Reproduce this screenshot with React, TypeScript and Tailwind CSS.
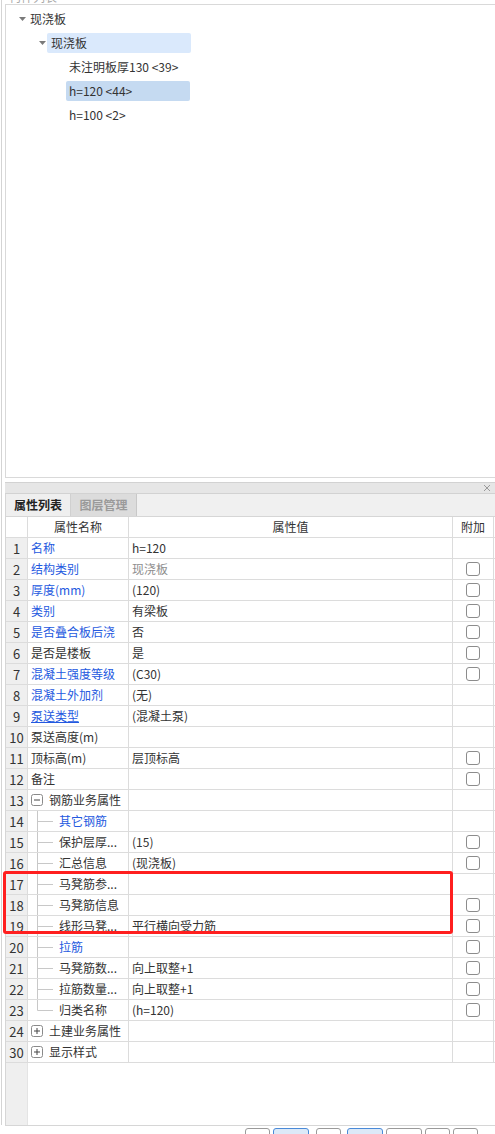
import React from 'react'

type Kind = 'plain' | 'open' | 'closed' | 'child' | 'last'

interface Row {
  n: number
  name: string
  value?: string
  blue?: boolean
  grayValue?: boolean
  underline?: boolean
  cb?: boolean
  kind: Kind
}

const rows: Row[] = [
  { n: 1, name: '名称', value: 'h=120', blue: true, kind: 'plain' },
  { n: 2, name: '结构类别', value: '现浇板', blue: true, grayValue: true, cb: true, kind: 'plain' },
  { n: 3, name: '厚度(mm)', value: '(120)', blue: true, cb: true, kind: 'plain' },
  { n: 4, name: '类别', value: '有梁板', blue: true, cb: true, kind: 'plain' },
  { n: 5, name: '是否叠合板后浇', value: '否', blue: true, cb: true, kind: 'plain' },
  { n: 6, name: '是否是楼板', value: '是', cb: true, kind: 'plain' },
  { n: 7, name: '混凝土强度等级', value: '(C30)', blue: true, cb: true, kind: 'plain' },
  { n: 8, name: '混凝土外加剂', value: '(无)', blue: true, kind: 'plain' },
  { n: 9, name: '泵送类型', value: '(混凝土泵)', blue: true, underline: true, kind: 'plain' },
  { n: 10, name: '泵送高度(m)', kind: 'plain' },
  { n: 11, name: '顶标高(m)', value: '层顶标高', cb: true, kind: 'plain' },
  { n: 12, name: '备注', cb: true, kind: 'plain' },
  { n: 13, name: '钢筋业务属性', kind: 'open' },
  { n: 14, name: '其它钢筋', blue: true, kind: 'child' },
  { n: 15, name: '保护层厚...', value: '(15)', cb: true, kind: 'child' },
  { n: 16, name: '汇总信息', value: '(现浇板)', cb: true, kind: 'child' },
  { n: 17, name: '马凳筋参...', kind: 'child' },
  { n: 18, name: '马凳筋信息', cb: true, kind: 'child' },
  { n: 19, name: '线形马凳...', value: '平行横向受力筋', cb: true, kind: 'child' },
  { n: 20, name: '拉筋', blue: true, cb: true, kind: 'child' },
  { n: 21, name: '马凳筋数...', value: '向上取整+1', cb: true, kind: 'child' },
  { n: 22, name: '拉筋数量...', value: '向上取整+1', cb: true, kind: 'child' },
  { n: 23, name: '归类名称', value: '(h=120)', cb: true, kind: 'last' },
  { n: 24, name: '土建业务属性', kind: 'closed' },
  { n: 30, name: '显示样式', kind: 'closed' },
]

const Caret = () => (
  <svg width="7" height="4" viewBox="0 0 7 4" className="shrink-0">
    <path d="M0 0 L7 0 L3.5 4 Z" fill="#7a7a7a" />
  </svg>
)

const ToggleBox = ({ open }: { open: boolean }) => (
  <svg width="12" height="12" viewBox="0 0 12 12" className="shrink-0">
    <rect x="0.5" y="0.5" width="11" height="11" rx="2" fill="#fff" stroke="#8a8a8a" />
    <path d="M3 6 H9" stroke="#444" />
    {!open && <path d="M6 3 V9" stroke="#444" />}
  </svg>
)

const Connector = ({ last }: { last: boolean }) => (
  <svg width="26" height="21" viewBox="0 0 26 21" className="shrink-0 self-start">
    <path d={last ? 'M9.5 0 V10.5' : 'M9.5 0 V21'} stroke="#c8c8c8" />
    <path d="M9.5 10.5 H25" stroke="#c8c8c8" />
  </svg>
)

const Checkbox = () => (
  <div className="w-[14px] h-[14px] rounded-[3px] border border-[#8c8c8c] bg-white" />
)

const PropRow = ({ row }: { row: Row }) => {
  const nameColor = row.blue ? 'text-[#2459e0]' : 'text-[#333]'
  return (
    <div className="flex shrink-0 h-[21px] border-b border-[#dcdcdc]">
      <div className="w-[22px] shrink-0 bg-[#efefef] border-r border-[#dcdcdc] flex items-center justify-center text-[13px] text-[#333]">
        {row.n}
      </div>
      <div className="w-[101px] shrink-0 border-r border-[#dcdcdc] flex items-center overflow-hidden whitespace-nowrap">
        {row.kind === 'plain' && (
          <span className={`pl-[3px] ${nameColor} ${row.underline ? 'underline' : ''}`}>{row.name}</span>
        )}
        {(row.kind === 'open' || row.kind === 'closed') && (
          <div className="flex items-center pl-[3px] gap-[6px]">
            <ToggleBox open={row.kind === 'open'} />
            <span className={nameColor}>{row.name}</span>
          </div>
        )}
        {(row.kind === 'child' || row.kind === 'last') && (
          <div className="flex items-center h-full">
            <Connector last={row.kind === 'last'} />
            <span className={`ml-[5px] ${nameColor}`}>{row.name}</span>
          </div>
        )}
      </div>
      <div className="w-[324px] shrink-0 border-r border-[#dcdcdc] flex items-center pl-[3px] whitespace-nowrap">
        <span className={row.grayValue ? 'text-[#8e8e8e]' : 'text-[#333]'}>{row.value}</span>
      </div>
      <div className="w-[41px] shrink-0 border-r border-[#dcdcdc] flex items-center justify-center">
        {row.cb && <Checkbox />}
      </div>
    </div>
  )
}

export default function App() {
  return (
    <div
      className="relative w-[495px] h-[1134px] overflow-hidden bg-white flex text-[12px] leading-none text-[#333]"
      style={{ fontFamily: '"Noto Sans CJK SC", "Noto Sans", sans-serif' }}
    >
      {/* outer gutter */}
      <div className="w-[5px] shrink-0 flex">
        <div className="ml-[1px] h-[1125px] border-l border-[#d4d4d4]" />
      </div>

      <div className="flex-1 flex flex-col min-w-0">
        {/* cut-off title strip */}
        <div className="h-[4px] shrink-0 overflow-hidden">
          <div className="-mt-[9px] pl-[4px] text-[12px] text-[#aaa]">构件列表</div>
        </div>

        {/* tree panel */}
        <div className="h-[474px] shrink-0 border-t border-b border-l border-[#d9d9d9] bg-white pt-[4px] flex flex-col gap-[4px]">
          <div className="flex items-center h-[20px]">
            <div className="w-[13px]" />
            <Caret />
            <span className="ml-[4px]">现浇板</span>
          </div>
          <div className="flex items-center h-[20px]">
            <div className="w-[33px]" />
            <Caret />
            <div className="ml-[1px] w-[144px] h-[20px] rounded-[2px] bg-[#dae9fc] flex items-center pl-[4px]">现浇板</div>
          </div>
          <div className="flex items-center h-[20px]">
            <div className="w-[60px]" />
            <div className="w-[124px] h-[20px] flex items-center pl-[3px]">未注明板厚130 &lt;39&gt;</div>
          </div>
          <div className="flex items-center h-[20px]">
            <div className="w-[60px]" />
            <div className="w-[124px] h-[20px] rounded-[2px] bg-[#c5daf1] flex items-center pl-[3px]">h=120 &lt;44&gt;</div>
          </div>
          <div className="flex items-center h-[20px]">
            <div className="w-[60px]" />
            <div className="w-[124px] h-[20px] flex items-center pl-[3px]">h=100 &lt;2&gt;</div>
          </div>
        </div>

        <div className="h-[4px] shrink-0" />

        {/* panel bar */}
        <div className="h-[12px] shrink-0 bg-[#e6e6e6] border-t border-b border-[#d2d2d2] flex items-center justify-end pr-[4px]">
          <svg width="8" height="8" viewBox="0 0 8 8">
            <path d="M1 1 L7 7 M7 1 L1 7" stroke="#9a9a9a" strokeWidth="1" />
          </svg>
        </div>

        {/* tabs */}
        <div className="h-[23px] shrink-0 bg-[#f0f0f0] border-b border-l border-[#d6d6d6] flex items-stretch">
          <div className="w-[65px] border-r border-[#d0d0d0] bg-[#efefef] flex items-center justify-center font-bold text-[#222]">
            属性列表
          </div>
          <div className="w-[66px] border-r border-[#c8c8c8] bg-[#dcdcdc] flex items-center justify-center font-bold text-[#9a9a9a]">
            图层管理
          </div>
        </div>

        {/* property table */}
        <div className="h-[609px] shrink-0 border-l border-b border-[#d6d6d6] flex flex-col">
          <div className="flex shrink-0 h-[21px] border-b border-[#dcdcdc]">
            <div className="w-[22px] shrink-0 border-r border-[#dcdcdc]" />
            <div className="w-[101px] shrink-0 border-r border-[#dcdcdc] flex items-center justify-center">属性名称</div>
            <div className="w-[324px] shrink-0 border-r border-[#dcdcdc] flex items-center justify-center">属性值</div>
            <div className="w-[41px] shrink-0 border-r border-[#dcdcdc] flex items-center justify-center">附加</div>
          </div>
          {rows.map(r => (
            <PropRow key={r.n} row={r} />
          ))}
          <div className="flex-1 flex">
            <div className="w-[22px] bg-[#efefef] border-r border-[#e4e4e4]" />
          </div>
        </div>

        {/* bottom buttons (cut off) */}
        <div className="mt-[2px] shrink-0 flex gap-[3px] pl-[240px]">
          <div className="w-[25px] h-[20px] rounded-[3px] border border-[#9a9a9a] bg-white" />
          <div className="w-[36px] h-[20px] rounded-[3px] border border-[#4a8ad8] bg-[#dce9f8]" />
          <div className="ml-[4px] w-[25px] h-[20px] rounded-[3px] border border-[#9a9a9a] bg-white" />
          <div className="ml-[3px] w-[36px] h-[20px] rounded-[3px] border border-[#4a8ad8] bg-[#dce9f8]" />
          <div className="w-[36px] h-[20px] rounded-[3px] border border-[#9a9a9a] bg-white" />
          <div className="w-[25px] h-[20px] rounded-[3px] border border-[#9a9a9a] bg-white" />
          <div className="w-[25px] h-[20px] rounded-[3px] border border-[#9a9a9a] bg-white" />
        </div>
      </div>

      {/* red annotation box */}
      <div className="absolute left-[3px] top-[871px] w-[450px] h-[63px] border-[3px] border-[#ff1f1f] rounded-[3px] pointer-events-none" />
    </div>
  )
}
